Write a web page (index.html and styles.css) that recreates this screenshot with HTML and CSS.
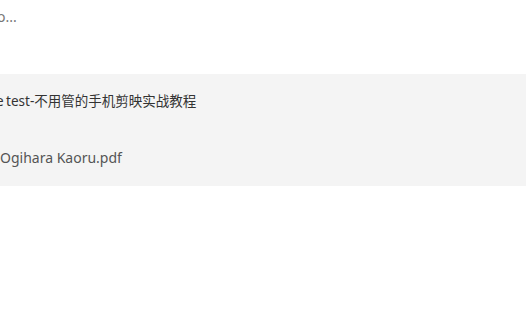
FILE: index.html
```
<!DOCTYPE html>
<html lang="en">
<head>
    <meta charset="UTF-8">
    <meta name="viewport" content="width=device-width, initial-scale=1.0">
    <title>Files</title>
    <link rel="stylesheet" href="styles.css">
</head>
<body>
    <div class="page">
        <div class="status">o...</div>
        <div class="list">
            <div class="item title">e test-不用管的手机剪映实战教程</div>
            <div class="item file">Ogihara Kaoru.pdf</div>
        </div>
    </div>
</body>
</html>
```
FILE: styles.css
```
body {
    margin: 0;
    overflow: hidden;
    background-color: #fff;
    font-family: "Noto Sans", "Noto Sans CJK SC", sans-serif;
}
.page {
    width: 526px;
    height: 326px;
    overflow: hidden;
}
.status {
    white-space: nowrap;
    margin-left: -3px;
    padding-top: 7px;
    height: 67px;
    font-size: 14px;
    color: #777;
}
.list {
    background-color: #f4f4f4;
    padding: 16px 0 19px;
}
.item {
    white-space: nowrap;
}
.title {
    color: #333;
    font-size: 13.5px;
    margin-left: -4px;
    word-spacing: -1px;
    height: 58px;
}
.file {
    color: #555;
    font-size: 14px;
}
```
